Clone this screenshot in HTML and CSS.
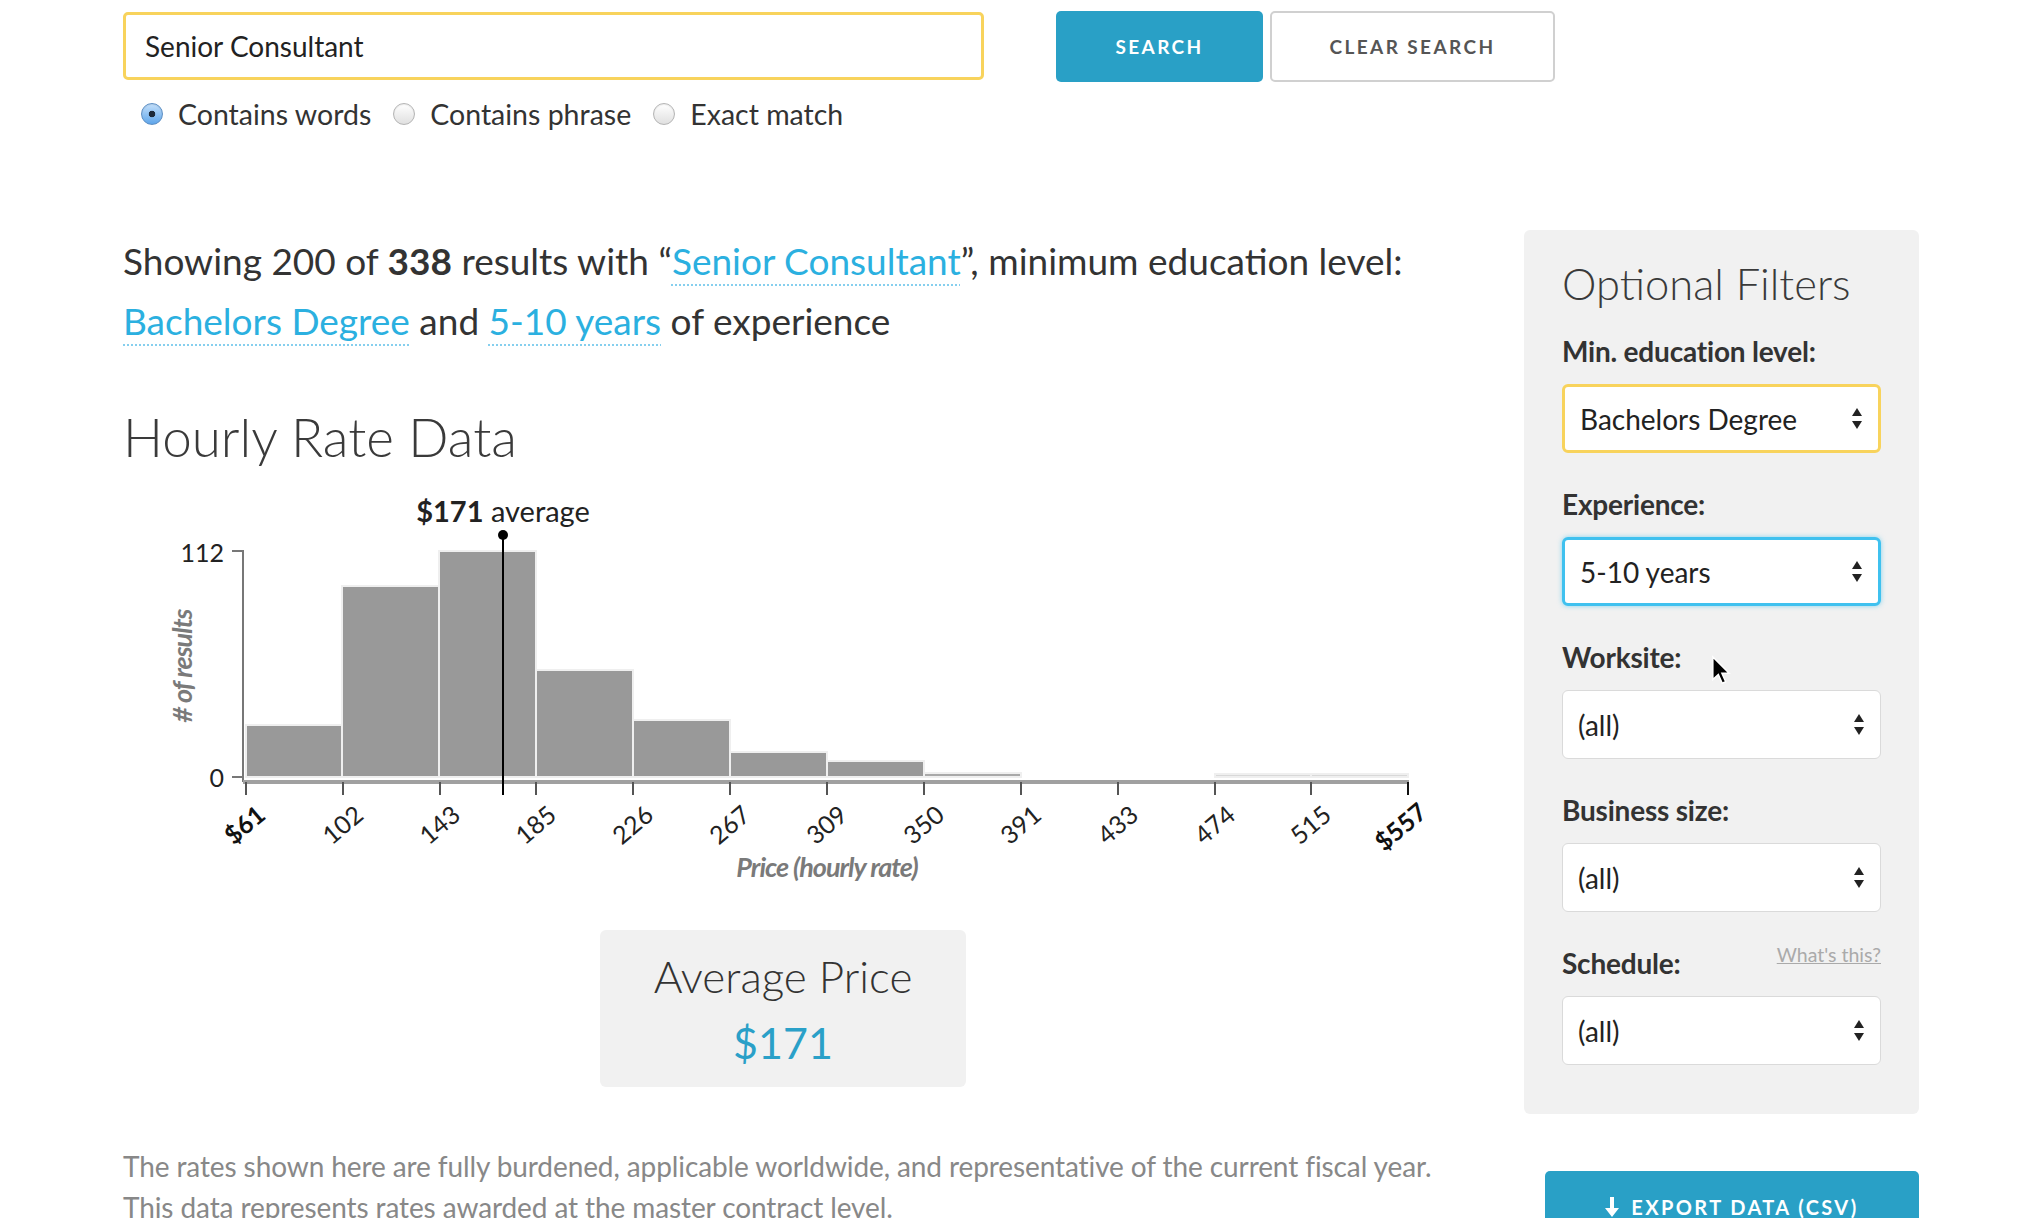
FILE: index.html
```html
<!DOCTYPE html>
<html lang="en">
<head>
<meta charset="utf-8">
<title>Hourly Rate Data</title>
<link rel="stylesheet" href="styles.css">
</head>
<body>
<div class="page">
  <div class="search-row">
    <div class="search-input">Senior Consultant</div>
    <div class="btn btn-primary">Search</div>
    <div class="btn btn-secondary">Clear Search</div>
  </div>
  <div class="radio-row">
    <div class="radio-item"><span class="radio on"></span><span>Contains words</span></div>
    <div class="radio-item"><span class="radio"></span><span>Contains phrase</span></div>
    <div class="radio-item"><span class="radio"></span><span>Exact match</span></div>
  </div>

  <div class="layout">
    <main class="main-col">
      <p class="summary">Showing 200 of <strong>338</strong> results with “<a class="link">Senior Consultant</a>”, minimum education level: <a class="link">Bachelors Degree</a> and <a class="link">5-10 years</a> of experience</p>
      <h2 class="chart-title">Hourly Rate Data</h2>
      <svg class="chart" width="1320" height="420" viewBox="123 480 1320 420">
        <g class="bars">
          <rect x="246" y="726" width="96" height="52"/>
          <rect x="342" y="587" width="97" height="191"/>
          <rect x="439" y="552" width="97" height="226"/>
          <rect x="536" y="671" width="97" height="107"/>
          <rect x="633" y="721" width="97" height="57"/>
          <rect x="730" y="753" width="97" height="25"/>
          <rect x="827" y="762" width="97" height="16"/>
          <rect class="pale" x="924" y="774" width="97" height="4"/>
          <rect class="faint" x="1215" y="775" width="96" height="3"/>
          <rect class="faint" x="1311" y="775" width="97" height="3"/>
        </g>
        <g class="y-axis">
          <path class="axis-line" d="M232 552 H243 V783"/>
          <path class="axis-line" d="M232 778 H243"/>
          <text x="224" y="553">112</text>
          <text x="224" y="778">0</text>
        </g>
        <line class="x-domain" x1="243" y1="783" x2="1409" y2="783"/>
        <g class="x-ticks">
          <line x1="246" y1="783" x2="246" y2="796"/>
          <line x1="343" y1="783" x2="343" y2="796"/>
          <line x1="440" y1="783" x2="440" y2="796"/>
          <line x1="536" y1="783" x2="536" y2="796"/>
          <line x1="633" y1="783" x2="633" y2="796"/>
          <line x1="730" y1="783" x2="730" y2="796"/>
          <line x1="827" y1="783" x2="827" y2="796"/>
          <line x1="924" y1="783" x2="924" y2="796"/>
          <line x1="1021" y1="783" x2="1021" y2="796"/>
          <line x1="1118" y1="783" x2="1118" y2="796"/>
          <line x1="1215" y1="783" x2="1215" y2="796"/>
          <line x1="1311" y1="783" x2="1311" y2="796"/>
          <line class="end" x1="1408" y1="783" x2="1408" y2="796"/>
        </g>
        <g class="x-labels">
          <text class="strong" x="244" y="825" transform="rotate(-40 244 825)">$61</text>
          <text x="342" y="825" transform="rotate(-40 342 825)">102</text>
          <text x="439" y="825" transform="rotate(-40 439 825)">143</text>
          <text x="535" y="825" transform="rotate(-40 535 825)">185</text>
          <text x="632" y="825" transform="rotate(-40 632 825)">226</text>
          <text x="729" y="825" transform="rotate(-40 729 825)">267</text>
          <text x="826" y="825" transform="rotate(-40 826 825)">309</text>
          <text x="923" y="825" transform="rotate(-40 923 825)">350</text>
          <text x="1020" y="825" transform="rotate(-40 1020 825)">391</text>
          <text x="1117" y="825" transform="rotate(-40 1117 825)">433</text>
          <text x="1214" y="825" transform="rotate(-40 1214 825)">474</text>
          <text x="1310" y="825" transform="rotate(-40 1310 825)">515</text>
          <text class="strong" x="1400" y="827" transform="rotate(-40 1400 827)">$557</text>
        </g>
        <line class="avg-line" x1="503" y1="536" x2="503" y2="796"/>
        <circle class="avg-dot" cx="503" cy="536" r="5"/>
        <text class="avg-label" x="503" y="523"><tspan class="strong">$171</tspan> average</text>
        <text class="axis-title" x="181" y="667" transform="rotate(-90 181 667)"># of results</text>
        <text class="axis-title" x="827" y="867">Price (hourly rate)</text>
      </svg>
      <div class="avg-card">
        <div class="avg-card-title">Average Price</div>
        <div class="avg-card-value">$171</div>
      </div>
      <p class="note">The rates shown here are fully burdened, applicable worldwide, and representative of the current fiscal year.<br>This data represents rates awarded at the master contract level.</p>
    </main>

    <aside class="side-col">
      <div class="filters">
        <h2 class="filters-title">Optional Filters</h2>
        <div class="field">
          <div class="field-label">Min. education level:</div>
          <div class="select warn"><span>Bachelors Degree</span><svg class="updown" width="10" height="22" viewBox="0 0 10 22"><path d="M5 0 L10 8 H0 Z M0 13 H10 L5 21 Z"/></svg></div>
        </div>
        <div class="field">
          <div class="field-label">Experience:</div>
          <div class="select focus"><span>5-10 years</span><svg class="updown" width="10" height="22" viewBox="0 0 10 22"><path d="M5 0 L10 8 H0 Z M0 13 H10 L5 21 Z"/></svg></div>
        </div>
        <div class="field">
          <div class="field-label">Worksite:</div>
          <div class="select"><span>(all)</span><svg class="updown" width="10" height="22" viewBox="0 0 10 22"><path d="M5 0 L10 8 H0 Z M0 13 H10 L5 21 Z"/></svg></div>
        </div>
        <div class="field">
          <div class="field-label">Business size:</div>
          <div class="select"><span>(all)</span><svg class="updown" width="10" height="22" viewBox="0 0 10 22"><path d="M5 0 L10 8 H0 Z M0 13 H10 L5 21 Z"/></svg></div>
        </div>
        <div class="field">
          <div class="field-label label-row"><span>Schedule:</span><a class="help">What's this?</a></div>
          <div class="select"><span>(all)</span><svg class="updown" width="10" height="22" viewBox="0 0 10 22"><path d="M5 0 L10 8 H0 Z M0 13 H10 L5 21 Z"/></svg></div>
        </div>
        <svg class="cursor" width="22" height="32" viewBox="0 0 18 26"><path d="M1.5 1.5 V20 L6 15.8 L9.2 23 L12 21.8 L8.9 14.8 H14.8 Z"/></svg>
      </div>
      <div class="export-btn"><svg class="dl-icon" width="14" height="20" viewBox="0 0 14 20"><path d="M5 0 H9 V11 H14 L7 20 L0 11 H5 Z"/></svg><span>Export Data (CSV)</span></div>
    </aside>
  </div>
</div>
</body>
</html>
```

FILE: styles.css
```css
* { box-sizing: border-box; }

html, body {
  margin: 0;
  padding: 0;
  background: #fff;
}

body {
  font-family: Lato, "Open Sans", "Liberation Sans", sans-serif;
  color: #333;
}

.page {
  padding: 12px 105px 0 123px;
}

/* search row */
.search-row {
  display: flex;
  align-items: center;
  height: 68px;
}

.search-input {
  width: 861px;
  height: 68px;
  border: 3px solid #f8d35c;
  border-radius: 5px;
  padding-left: 19px;
  font-size: 28px;
  color: #222;
  display: flex;
  align-items: center;
}

.btn {
  height: 71px;
  border-radius: 5px;
  font-weight: 700;
  font-size: 19px;
  letter-spacing: 2.4px;
  text-transform: uppercase;
  display: flex;
  align-items: center;
  justify-content: center;
}

.btn-primary {
  margin-left: 72px;
  width: 207px;
  background: #29a0c6;
  color: #fff;
}

.btn-secondary {
  margin-left: 7px;
  width: 285px;
  background: #fff;
  color: #555;
  border: 2px solid #d0d0d0;
}

/* radio row */
.radio-row {
  display: flex;
  align-items: center;
  gap: 22px;
  margin-top: 19px;
  padding-left: 18px;
  height: 30px;
  font-size: 28.5px;
  color: #333;
}

.radio-item {
  display: flex;
  align-items: center;
  gap: 15px;
}

.radio {
  width: 22px;
  height: 22px;
  border-radius: 50%;
  border: 1px solid #b4b4b4;
  background: linear-gradient(#ffffff, #e0e0e0);
  box-shadow: inset 0 1px 1px rgba(0, 0, 0, 0.08);
}

.radio.on {
  border-color: #5d8fc4;
  background: radial-gradient(circle, #1d2a3a 0 3px, transparent 3.6px), linear-gradient(#c4e0fb, #5ea5ea);
}

/* layout */
.layout {
  display: grid;
  grid-template-columns: 1320px 395px;
  column-gap: 81px;
  margin-top: 101px;
  align-items: start;
}

.summary {
  margin: 0;
  padding-top: 1px;
  font-size: 37px;
  line-height: 60px;
  color: #333;
}

.summary strong {
  font-weight: 700;
}

.link {
  color: #2bb0e0;
  text-decoration: underline dotted #86cfee;
  text-decoration-thickness: 2px;
  text-underline-offset: 9px;
}

.chart-title {
  margin: 56px 0 0;
  font-weight: 300;
  font-size: 53px;
  line-height: 60px;
  color: #3a3a3a;
}

.chart {
  display: block;
  margin-top: 12px;
  overflow: visible;
  font-family: Lato, "Open Sans", sans-serif;
}

.bars rect {
  fill: #999;
  stroke: #efefef;
  stroke-width: 2;
}

.bars rect.pale {
  fill: #a9a9a9;
}

.bars rect.faint {
  fill: #d8d8d8;
}

.axis-line {
  fill: none;
  stroke: #777;
  stroke-width: 2;
}

.y-axis text {
  font-size: 25px;
  fill: #222;
  text-anchor: end;
  dominant-baseline: central;
}

.x-domain {
  stroke: #a0a0a0;
  stroke-width: 4;
}

.x-ticks line {
  stroke: #555;
  stroke-width: 2;
}

.x-ticks line.end {
  stroke: #111;
}

.x-labels text {
  font-size: 25px;
  fill: #222;
  text-anchor: middle;
  dominant-baseline: central;
}

.x-labels text.strong {
  font-weight: 700;
  fill: #111;
}

.avg-line {
  stroke: #000;
  stroke-width: 2;
}

.avg-dot {
  fill: #000;
}

.avg-label {
  font-size: 29px;
  fill: #222;
  text-anchor: middle;
}

.avg-label .strong {
  font-weight: 700;
}

.axis-title {
  font-size: 27px;
  font-style: italic;
  font-weight: 700;
  fill: #7a7a7a;
  letter-spacing: -1px;
  text-anchor: middle;
  dominant-baseline: central;
}

/* average card */
.avg-card {
  width: 366px;
  height: 157px;
  margin: 31px auto 0;
  padding-top: 18px;
  background: #f1f1f1;
  border-radius: 6px;
  text-align: center;
}

.avg-card-title {
  font-weight: 300;
  font-size: 44px;
  line-height: 56px;
  color: #333;
}

.avg-card-value {
  margin-top: 9px;
  font-size: 43px;
  line-height: 60px;
  color: #2aa0c8;
}

.note {
  margin: 59px 0 0;
  font-size: 28px;
  line-height: 41px;
  color: #888;
  letter-spacing: -0.1px;
}

/* sidebar */
.filters {
  position: relative;
  background: #f1f1f1;
  border-radius: 6px;
  padding: 27px 38px 49px;
}

.filters-title {
  margin: 0 0 25px;
  font-weight: 300;
  font-size: 43.5px;
  line-height: 53px;
  color: #3a3a3a;
}

.field + .field {
  margin-top: 35px;
}

.field-label {
  font-weight: 700;
  font-size: 28px;
  line-height: 32px;
  margin-bottom: 17px;
  color: #333;
  letter-spacing: -0.2px;
}

.label-row {
  display: flex;
  justify-content: space-between;
  align-items: flex-start;
}

.help {
  font-weight: 400;
  font-size: 19.5px;
  line-height: 20px;
  color: #aaa;
  text-decoration: underline;
  letter-spacing: 0;
  margin-top: -2px;
}

.select {
  height: 69px;
  background: #fff;
  border: 1px solid #dadada;
  border-radius: 6px;
  padding: 0 16px 0 15px;
  display: flex;
  align-items: center;
  justify-content: space-between;
  font-size: 28px;
  color: #222;
}

.select.warn {
  border: 3px solid #f8d35c;
  padding-left: 15px;
}

.select.focus {
  border: 3px solid #3fc1ef;
  box-shadow: 0 0 5px rgba(63, 193, 239, 0.6);
  padding-left: 15px;
}

.updown {
  fill: #222;
  flex: none;
}

.cursor {
  position: absolute;
  left: 187px;
  top: 425px;
  fill: #000;
  stroke: #fff;
  stroke-width: 1.2;
}

.export-btn {
  margin: 57px 0 0 21px;
  height: 72px;
  background: #29a0c6;
  border-radius: 5px;
  color: #fff;
  font-weight: 700;
  font-size: 20px;
  letter-spacing: 2.4px;
  text-transform: uppercase;
  display: flex;
  align-items: center;
  justify-content: center;
  gap: 12px;
}

.dl-icon {
  fill: #fff;
}
```
